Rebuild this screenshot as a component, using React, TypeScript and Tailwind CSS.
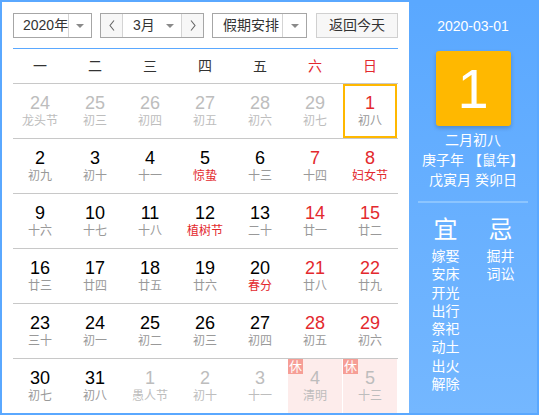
import React from "react";

type Day = {
  d: number;
  l: string;
  other?: boolean;
  fest?: boolean;
  rest?: boolean;
  sel?: boolean;
};

const weekdays = ["一", "二", "三", "四", "五", "六", "日"];

const weeks: Day[][] = [
  [
    { d: 24, l: "龙头节", other: true },
    { d: 25, l: "初三", other: true },
    { d: 26, l: "初四", other: true },
    { d: 27, l: "初五", other: true },
    { d: 28, l: "初六", other: true },
    { d: 29, l: "初七", other: true },
    { d: 1, l: "初八", sel: true },
  ],
  [
    { d: 2, l: "初九" },
    { d: 3, l: "初十" },
    { d: 4, l: "十一" },
    { d: 5, l: "惊蛰", fest: true },
    { d: 6, l: "十三" },
    { d: 7, l: "十四" },
    { d: 8, l: "妇女节", fest: true },
  ],
  [
    { d: 9, l: "十六" },
    { d: 10, l: "十七" },
    { d: 11, l: "十八" },
    { d: 12, l: "植树节", fest: true },
    { d: 13, l: "二十" },
    { d: 14, l: "廿一" },
    { d: 15, l: "廿二" },
  ],
  [
    { d: 16, l: "廿三" },
    { d: 17, l: "廿四" },
    { d: 18, l: "廿五" },
    { d: 19, l: "廿六" },
    { d: 20, l: "春分", fest: true },
    { d: 21, l: "廿八" },
    { d: 22, l: "廿九" },
  ],
  [
    { d: 23, l: "三十" },
    { d: 24, l: "初一" },
    { d: 25, l: "初二" },
    { d: 26, l: "初三" },
    { d: 27, l: "初四" },
    { d: 28, l: "初五" },
    { d: 29, l: "初六" },
  ],
  [
    { d: 30, l: "初七" },
    { d: 31, l: "初八" },
    { d: 1, l: "愚人节", other: true },
    { d: 2, l: "初十", other: true },
    { d: 3, l: "十一", other: true },
    { d: 4, l: "清明", other: true, rest: true },
    { d: 5, l: "十三", other: true, rest: true },
  ],
];

const yi = ["嫁娶", "安床", "开光", "出行", "祭祀", "动土", "出火", "解除"];
const ji = ["掘井", "词讼"];

function Caret() {
  return (
    <svg width="8" height="4" viewBox="0 0 8 4">
      <polygon points="0,0 8,0 4,4" fill="#8a8a8a" />
    </svg>
  );
}

function Chevron({ dir }: { dir: "left" | "right" }) {
  return (
    <svg width="6" height="11" viewBox="0 0 6 11">
      <polyline
        points={dir === "left" ? "5,0.5 1,5.5 5,10.5" : "1,0.5 5,5.5 1,10.5"}
        fill="none"
        stroke="#666"
        strokeWidth="1.1"
      />
    </svg>
  );
}

function Cell({ day, col }: { day: Day; col: number }) {
  const weekend = col >= 5;
  const numColor = day.other
    ? "text-[#bdbdbd]"
    : weekend
      ? "text-[#e3292e]"
      : "text-black";
  const lunarColor = day.other
    ? "text-[#bdbdbd]"
    : day.fest
      ? "text-[#e3292e]"
      : "text-[#999999]";

  return (
    <div
      className={`relative w-[54px] h-[54px] flex flex-col items-center justify-center ${
        day.sel ? "border-2 border-[#ffb800]" : ""
      } ${day.rest ? "bg-[#fdeceb]" : ""}`}
    >
      {day.rest && (
        <span className="absolute left-0 top-0 w-[15px] h-[15px] bg-[#f69e96] text-white text-[13px] leading-[15px] text-center">
          休
        </span>
      )}
      <span className={`text-[18px] leading-[20px] ${numColor}`}>{day.d}</span>
      <span className={`text-[12px] leading-[16px] ${lunarColor}`}>{day.l}</span>
    </div>
  );
}

export default function App() {
  return (
    <div className="w-[539px] h-[415px] flex border-2 border-[#5aa8ff] bg-white font-['Liberation_Sans','Noto_Sans_CJK_SC',sans-serif]">
      {/* Calendar */}
      <div className="w-[407px] pt-[11px] px-[11px]">
        <div className="flex h-[25px] text-[14px] text-[#333] whitespace-nowrap">
          <div className="flex w-[79px] border border-[#a6a6a6]">
            <div className="flex-1 flex items-center pl-[9px]">2020年</div>
            <div className="w-[24px] border-l border-[#d4d4d4] flex items-center justify-center">
              <Caret />
            </div>
          </div>

          <div className="ml-[8px] flex w-[104px] border border-[#a6a6a6]">
            <button className="w-[22px] border-r border-[#d4d4d4] bg-[#f7f7f7] flex items-center justify-center">
              <Chevron dir="left" />
            </button>
            <div className="flex-1 flex items-center justify-between pl-[10px] pr-[7px]">
              <span>3月</span>
              <Caret />
            </div>
            <button className="w-[22px] border-l border-[#d4d4d4] bg-[#f7f7f7] flex items-center justify-center">
              <Chevron dir="right" />
            </button>
          </div>

          <div className="ml-[8px] flex w-[95px] border border-[#a6a6a6]">
            <div className="flex-1 flex items-center pl-[10px]">假期安排</div>
            <div className="w-[24px] border-l border-[#d4d4d4] flex items-center justify-center">
              <Caret />
            </div>
          </div>

          <button className="ml-auto w-[82px] border border-[#d0d0d0] bg-[#f7f7f7] text-[#333] flex items-center justify-center">
            返回今天
          </button>
        </div>

        <div className="mt-[10px] h-px bg-[#5aa8ff]" />

        <div className="grid grid-cols-[repeat(7,55px)] h-[34px] items-center text-[14px]">
          {weekdays.map((w, i) => (
            <div
              key={w}
              className={`w-[54px] text-center ${i >= 5 ? "text-[#e3292e]" : "text-[#333]"}`}
            >
              {w}
            </div>
          ))}
        </div>

        {weeks.map((week, r) => (
          <div key={r} className="grid grid-cols-[repeat(7,55px)] border-t border-[#c8c8c8]">
            {week.map((day, c) => (
              <Cell key={c} day={day} col={c} />
            ))}
          </div>
        ))}
      </div>

      {/* Detail panel */}
      <div className="flex-1 flex flex-col items-center bg-gradient-to-b from-[#5aa8ff] to-[#74b7ff] text-white pt-[14px]">
        <div className="text-[14px] leading-[20px]">2020-03-01</div>
        <div className="mt-[15px] w-[75px] h-[75px] rounded-[3px] bg-[#ffb800] shadow-[0_2px_4px_rgba(0,0,0,0.2)] flex items-center justify-center text-[56px] leading-none">
          1
        </div>
        <div className="mt-[4px] text-[14px] leading-[20px] text-center">
          <div>二月初八</div>
          <div>庚子年 【鼠年】</div>
          <div>戊寅月 癸卯日</div>
        </div>
        <div className="mt-[11px] w-[110px] h-[2px] bg-[#8cc5ff]" />
        <div className="mt-[12px] flex">
          <div className="w-[55px] flex flex-col items-center">
            <div className="text-[24px] leading-[30px]">宜</div>
            <div className="mt-[2px] text-[14px] leading-[18.3px] text-center">
              {yi.map((t) => (
                <div key={t}>{t}</div>
              ))}
            </div>
          </div>
          <div className="w-[55px] flex flex-col items-center">
            <div className="text-[24px] leading-[30px]">忌</div>
            <div className="mt-[2px] text-[14px] leading-[18.3px] text-center">
              {ji.map((t) => (
                <div key={t}>{t}</div>
              ))}
            </div>
          </div>
        </div>
      </div>
    </div>
  );
}
